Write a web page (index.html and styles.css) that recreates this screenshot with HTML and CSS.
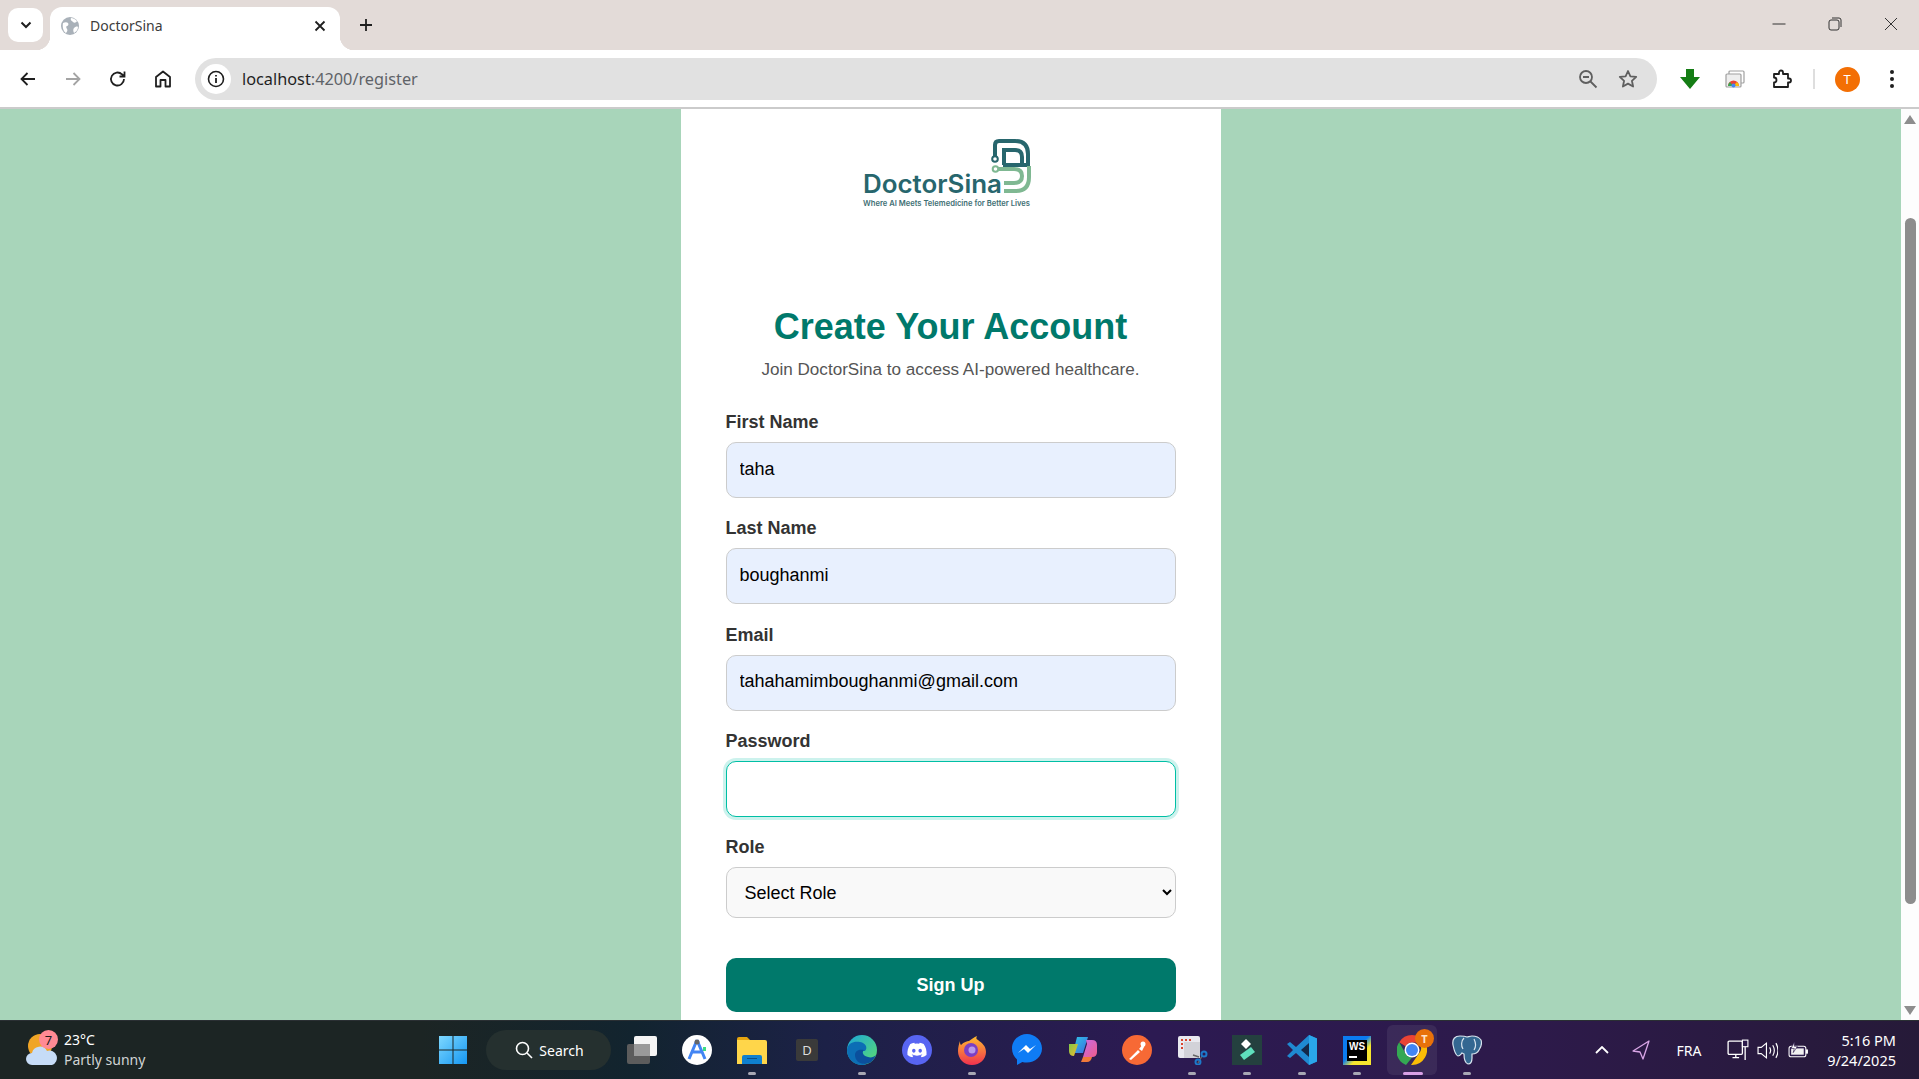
FILE: index.html
```html
<!DOCTYPE html>
<html lang="en">

<head>
    <meta charset="UTF-8">
    <meta name="viewport" content="width=device-width, initial-scale=1.0">
    <title>DoctorSina</title>
    <link rel="stylesheet" href="styles.css">
</head>

<body>
    <div class="tabstrip">
        <button class="tab-search">
            <svg width="16" height="16" viewBox="0 0 16 16"><path d="M3.500 5.500 8 10l4.500-4.500" fill="none" stroke="#1f1f1f" stroke-width="2"/></svg>
        </button>
        <div class="tab">
            <svg class="favicon" width="18" height="18" viewBox="0 0 18 18"><circle cx="9" cy="9" r="9" fill="#a9b1b9"/><path d="M2 6c2-1 4-1 5 0s0 3-1 3-1 2 0 3 0 3-1 4C3 15 1 11 2 6zM10 1c2 0 4 1 6 3-1 2-3 2-4 1s-3-2-2-4zM17 10c0 3-2 5-4 6-1-2-1-4 0-5s3-2 4-1z" fill="#fff"/></svg>
            <span class="tab-title">DoctorSina</span>
            <svg class="tab-close" width="12" height="12" viewBox="0 0 12 12"><path d="M1.500 1.500l9 9M10.500 1.500l-9 9" stroke="#1f1f1f" stroke-width="1.800"/></svg>
        </div>
        <svg class="new-tab" width="14" height="14" viewBox="0 0 14 14"><path d="M7 1v12M1 7h12" stroke="#1f1f1f" stroke-width="1.800"/></svg>
        <div class="window-controls">
            <span class="win-btn"><svg width="14" height="14" viewBox="0 0 14 14"><path d="M0.500 7h13" stroke="#333" stroke-width="1"/></svg></span>
            <span class="win-btn"><svg width="14" height="14" viewBox="0 0 14 14"><rect x="1" y="3" width="10" height="10" rx="2" fill="none" stroke="#333"/><path d="M4 1h7a2 2 0 0 1 2 2v7" fill="none" stroke="#333"/></svg></span>
            <span class="win-btn"><svg width="14" height="14" viewBox="0 0 14 14"><path d="M1 1l12 12M13 1L1 13" stroke="#333" stroke-width="1"/></svg></span>
        </div>
    </div>

    <div class="toolbar">
        <span class="tool-btn"><svg width="20" height="20" viewBox="0 0 20 20"><path d="M17 10H4M9.500 4 3.500 10l6 6" fill="none" stroke="#1f1f1f" stroke-width="1.800"/></svg></span>
        <span class="tool-btn"><svg width="20" height="20" viewBox="0 0 20 20"><path d="M3 10h13M10.500 4l6 6-6 6" fill="none" stroke="#a4a4a4" stroke-width="1.800"/></svg></span>
        <span class="tool-btn"><svg width="20" height="20" viewBox="0 0 20 20"><path d="M16 10a6.500 6.500 0 1 1-2-4.700L16 7M16.500 2.500V7.500h-5" fill="none" stroke="#1f1f1f" stroke-width="1.800"/></svg></span>
        <span class="tool-btn"><svg width="20" height="20" viewBox="0 0 20 20"><path d="M3 17.500V8l7-5.500L17 8v9.500h-4.500V11h-5v6.500z" fill="none" stroke="#1f1f1f" stroke-width="1.800" stroke-linejoin="round"/></svg></span>
        <div class="omnibox">
            <span class="site-info"><svg width="18" height="18" viewBox="0 0 18 18"><circle cx="9" cy="9" r="7.500" fill="none" stroke="#1f1f1f" stroke-width="1.600"/><path d="M9 8v5M9 5v1.600" stroke="#1f1f1f" stroke-width="1.800"/></svg></span>
            <span class="url"><span class="url-host">localhost</span>:4200/register</span>
            <svg class="omni-icon" width="20" height="20" viewBox="0 0 20 20"><circle cx="8" cy="8" r="6" fill="none" stroke="#5f5f5f" stroke-width="1.800"/><path d="M5 8h6M12.500 12.500l6 6" stroke="#5f5f5f" stroke-width="1.800"/></svg>
            <svg class="omni-icon" width="20" height="20" viewBox="0 0 20 20"><path d="M10 2l2.400 5.300 5.800.6-4.300 3.900 1.200 5.700L10 14.600l-5.100 2.900 1.200-5.700L1.800 7.900l5.800-.6z" fill="none" stroke="#5f5f5f" stroke-width="1.800" stroke-linejoin="round"/></svg>
        </div>
        <div class="toolbar-right">
            <span class="tool-btn"><svg width="22" height="20" viewBox="0 0 22 20"><path d="M7 0h8v8h6L11 20 1 8h6z" fill="#157d15"/></svg></span>
            <span class="tool-btn"><svg width="20" height="18" viewBox="0 0 20 18"><rect x="4" y="1" width="15" height="12" rx="1" fill="#fff" stroke="#a0a0a0" stroke-width="1.200"/><rect x="1" y="4" width="15" height="13" rx="1" fill="#eee" stroke="#a0a0a0" stroke-width="1.200"/><path d="M3 16a5.500 5.500 0 0 1 11 0z" fill="#ea4335"/><path d="M3 16a5.500 5.500 0 0 1 2-4l3 4z" fill="#34a853"/><path d="M14 16a5.500 5.500 0 0 0-2-4l-4 4z" fill="#fbbc05"/><circle cx="8.500" cy="15.500" r="2" fill="#4285f4"/></svg></span>
            <span class="tool-btn puzzle-btn"><svg width="20" height="20" viewBox="0 0 20 20"><path d="M2 5h5V3.500a2 2 0 0 1 4 0V5h5v4.500h1a2 2 0 0 1 0 4h-1V18H2v-4.500a2.500 2.500 0 0 0 0-5z" fill="none" stroke="#1f1f1f" stroke-width="1.800" stroke-linejoin="round"/></svg></span>
            <span class="toolbar-sep"></span>
            <span class="tool-btn avatar-btn"><span class="avatar">T</span></span>
            <span class="tool-btn"><svg width="6" height="20" viewBox="0 0 6 20"><circle cx="3" cy="3" r="2" fill="#1f1f1f"/><circle cx="3" cy="10" r="2" fill="#1f1f1f"/><circle cx="3" cy="17" r="2" fill="#1f1f1f"/></svg></span>
        </div>
    </div>

    <div class="viewport">
        <main class="page">
            <div class="card">
                <svg class="logo" width="180" height="72" viewBox="0 0 180 72">
                    <path d="M134 24V10q0-4 4-4h16q13 0 13 13v11" fill="none" stroke="#27666d" stroke-width="4"/>
                    <path d="M143 30V15h11q7 0 7 7v8M142 30h27" fill="none" stroke="#27666d" stroke-width="4"/>
                    <circle cx="134" cy="24" r="2.800" fill="#fff" stroke="#27666d" stroke-width="2"/>
                    <path d="M137 34h16q8 0 8 7t-8 7h-10M168 31v11q0 14-13 14h-12" fill="none" stroke="#7fb892" stroke-width="4"/>
                    <circle cx="134.500" cy="34" r="2.800" fill="#fff" stroke="#7fb892" stroke-width="2"/>
                    <text class="logo-name" x="2" y="58" textLength="139" lengthAdjust="spacingAndGlyphs">DoctorSina</text>
                    <text class="logo-tag" x="2" y="70.500" textLength="167" lengthAdjust="spacingAndGlyphs">Where AI Meets Telemedicine for Better Lives</text>
                </svg>

                <h1>Create Your Account</h1>
                <p class="subtitle">Join DoctorSina to access AI-powered healthcare.</p>

                <form>
                    <div class="field">
                        <label>First Name</label>
                        <input class="autofilled" type="text" value="taha">
                    </div>
                    <div class="field">
                        <label>Last Name</label>
                        <input class="autofilled" type="text" value="boughanmi">
                    </div>
                    <div class="field">
                        <label>Email</label>
                        <input class="autofilled" type="email" value="tahahamimboughanmi@gmail.com">
                    </div>
                    <div class="field">
                        <label>Password</label>
                        <input class="focused" type="password">
                    </div>
                    <div class="field">
                        <label>Role</label>
                        <select>
                            <option>Select Role</option>
                        </select>
                    </div>
                    <button class="submit-btn" type="button">Sign Up</button>
                </form>
            </div>
        </main>
        <div class="scrollbar">
            <span class="arrow-up"></span>
            <span class="thumb"></span>
            <span class="arrow-down"></span>
        </div>
    </div>

    <footer class="taskbar">
        <div class="weather">
            <div class="weather-icon">
                <svg width="32" height="38" viewBox="0 0 32 38"><circle cx="14" cy="15" r="12" fill="#f0a526"/><path d="M6 34a6 6 0 0 1 0-12 8 8 0 0 1 15-2 7 7 0 0 1 5 14z" fill="#c6dcf7"/></svg>
                <span class="weather-badge">7</span>
            </div>
            <div class="weather-text">
                <span class="temp">23°C</span>
                <span class="sky">Partly sunny</span>
            </div>
        </div>

        <svg class="start" width="30" height="30" viewBox="0 0 30 30">
            <defs><linearGradient id="winGrad" x1="0" y1="0" x2="1" y2="1"><stop offset="0" stop-color="#7ed8ff"/><stop offset="1" stop-color="#1597f2"/></linearGradient></defs>
            <path d="M1 1h13.500v13.500H1zM15.500 1H29v13.500H15.500zM1 15.500h13.500V29H1zM15.500 15.500H29V29H15.500z" fill="url(#winGrad)"/>
        </svg>

        <div class="search-pill">
            <svg width="18" height="18" viewBox="0 0 18 18"><circle cx="7.500" cy="7.500" r="6" fill="none" stroke="#fff" stroke-width="1.600"/><path d="M12 12l5 5" stroke="#fff" stroke-width="1.600"/></svg>
            <span>Search</span>
        </div>

        <div class="apps">
            <div class="app"><svg width="32" height="30" viewBox="0 0 32 30"><rect x="1" y="9" width="23" height="20" rx="2" fill="#5c5c5c"/><rect x="8" y="1" width="23" height="20" rx="2" fill="#f5f5f5"/><rect x="8" y="9" width="16" height="12" fill="#9a9a9a"/></svg></div>
            <div class="app"><svg width="30" height="30" viewBox="0 0 30 30"><circle cx="15" cy="15" r="15" fill="#fff"/><path d="M15 5 7 24M15 5l8 19M10 17h10" fill="none" stroke="#4285f4" stroke-width="3"/><circle cx="15" cy="7" r="2.500" fill="#666"/><path d="M21 12h3v4h-3z" fill="#3ddc84"/></svg></div>
            <div class="app"><svg width="30" height="28" viewBox="0 0 30 28"><path d="M0 3q0-2 2-2h8l3 3h-13z" fill="#e5a50f"/><path d="M0 4h28q2 0 2 2v22H0z" fill="#ffd64a"/><path d="M5 21q0-2 2-2h16q2 0 2 2v7H5z" fill="#0f80cf"/><path d="M10 22.500h10" stroke="#0a4f8a" stroke-width="1"/></svg><span class="run"></span></div>
            <div class="app"><span class="d-icon">D</span></div>
            <div class="app"><svg width="30" height="30" viewBox="0 0 30 30"><defs><linearGradient id="edgeGrad" x1="0" y1="0" x2="1" y2="1"><stop offset="0" stop-color="#1ba6d9"/><stop offset="1" stop-color="#5dde6e"/></linearGradient></defs><circle cx="15" cy="15" r="15" fill="url(#edgeGrad)"/><path d="M0 15C1 7 8 6 13 7c6 1 8 6 5 9-3 0-8-1-9 3-1 5 4 9 10 10-1 1-3 1-4 1C6 30 0 23 0 15z" fill="#0c6eb5"/><path d="M8 20c0-5 5-6 9-5-3 3 0 6 4 7 3 1 6 0 8-2-2 5-6 9-11 9-6 0-10-4-10-9z" fill="#0b4f9c"/></svg><span class="run"></span></div>
            <div class="app"><svg width="30" height="30" viewBox="0 0 30 30"><circle cx="15" cy="15" r="15" fill="#5865f2"/><path transform="translate(5.400 5.400) scale(.8)" fill="#fff" d="M20.317 4.370a19.791 19.791 0 0 0-4.885-1.515.074.074 0 0 0-.079.037c-.21.375-.444.864-.608 1.250a18.270 18.270 0 0 0-5.487 0 12.640 12.640 0 0 0-.617-1.250.077.077 0 0 0-.079-.037A19.736 19.736 0 0 0 3.677 4.370a.07.07 0 0 0-.032.027C.533 9.046-.32 13.580.099 18.057a.082.082 0 0 0 .031.057 19.900 19.900 0 0 0 5.993 3.030.078.078 0 0 0 .084-.028 14.090 14.090 0 0 0 1.226-1.994.076.076 0 0 0-.041-.106 13.107 13.107 0 0 1-1.872-.892.077.077 0 0 1-.008-.128 10.200 10.200 0 0 0 .372-.292.074.074 0 0 1 .077-.01c3.928 1.793 8.180 1.793 12.062 0a.074.074 0 0 1 .078.01c.12.098.246.198.373.292a.077.077 0 0 1-.006.127 12.299 12.299 0 0 1-1.873.892.077.077 0 0 0-.041.107c.36.698.772 1.362 1.225 1.993a.076.076 0 0 0 .084.028 19.839 19.839 0 0 0 6.002-3.030.077.077 0 0 0 .032-.054c.5-5.177-.838-9.674-3.549-13.660a.061.061 0 0 0-.031-.03zM8.020 15.330c-1.183 0-2.157-1.085-2.157-2.419 0-1.333.956-2.419 2.157-2.419 1.210 0 2.176 1.096 2.157 2.420 0 1.333-.956 2.418-2.157 2.418zm7.975 0c-1.183 0-2.157-1.085-2.157-2.419 0-1.333.955-2.419 2.157-2.419 1.210 0 2.176 1.096 2.157 2.420 0 1.333-.946 2.418-2.157 2.418z"/></svg></div>
            <div class="app"><svg width="30" height="30" viewBox="0 0 30 30"><defs><linearGradient id="foxGrad" x1="0" y1="0" x2="0" y2="1"><stop offset="0" stop-color="#ffbd2e"/><stop offset="1" stop-color="#f0314f"/></linearGradient></defs><path d="M3 6c0 2 0 3 1 4 3-3 6-4 8-4 3-2 5-4 8-5-1 2-1 3 1 4 4 3 8 6 8 12 0 7-6 13-14 13S1 24 1 16c0-4 1-7 2-10z" fill="url(#foxGrad)"/><circle cx="14" cy="15" r="7" fill="#7b3fc4"/><circle cx="15" cy="15" r="3.500" fill="#b799ec"/></svg><span class="run"></span></div>
            <div class="app"><svg width="30" height="32" viewBox="0 0 30 32"><path d="M15 0C7 0 0 6 0 14.500c0 4.500 2 8.400 5 11V31l5.300-3c1.500.4 3 .6 4.700.6 8 0 15-6 15-14.100S23 0 15 0z" fill="#0f7cf5"/><path d="M6 19l8-8 4 4 6-4-8 8-4-4z" fill="#fff"/></svg></div>
            <div class="app"><svg width="29" height="26" viewBox="0 0 29 26"><defs><linearGradient id="copGrad1" x1="0" y1="0" x2="1" y2="1"><stop offset="0" stop-color="#2fc5e8"/><stop offset="1" stop-color="#3b6be0"/></linearGradient><linearGradient id="copGrad2" x1="0" y1="0" x2="1" y2="1"><stop offset="0" stop-color="#7fc948"/><stop offset="1" stop-color="#f6b72e"/></linearGradient><linearGradient id="copGrad3" x1="0" y1="0" x2="1" y2="1"><stop offset="0" stop-color="#c56be8"/><stop offset="1" stop-color="#ef5c8a"/></linearGradient></defs><path d="M9 0h11l-5 16H5z" fill="url(#copGrad1)"/><path d="M1 7h9L6 19q-5 0-5-5z" fill="url(#copGrad2)"/><path d="M18 3h6q5 0 5 5v7q0 5-5 5h-9l4-13z" fill="url(#copGrad3)"/><path d="M13 25h6q4 0 5-5h-9z" fill="#f07a3a"/></svg></div>
            <div class="app"><svg width="30" height="30" viewBox="0 0 30 30"><circle cx="15" cy="15" r="15" fill="#f76935"/><path d="M7 24l9-9 2 2-9 8zM17 14l4-5 2 1-3 6z" fill="#fff"/><circle cx="21" cy="9" r="2.500" fill="#fff"/></svg></div>
            <div class="app"><svg width="31" height="30" viewBox="0 0 31 30"><rect x="1" y="1" width="22" height="22" rx="2" fill="#e9e9ef"/><rect x="7" y="7" width="16" height="16" fill="#d2d2d8"/><path d="M4 4h2v2H4zM8 4h2v2H8zM12 4h2v2h-2zM4 8h2v2H4zM4 12h2v2H4z" fill="#d9452f"/><path d="M16 20l6 2M21 28l4-7" stroke="#666" stroke-width="1.500"/><circle cx="27" cy="19" r="2.500" fill="none" stroke="#1d79c9" stroke-width="2"/><circle cx="21" cy="27" r="2.500" fill="none" stroke="#1d79c9" stroke-width="2"/></svg><span class="run"></span></div>
            <div class="app"><svg width="30" height="30" viewBox="0 0 30 30"><rect width="30" height="30" fill="#24403f"/><path d="M9 9l5-5 5 5-5 5z" fill="#fff"/><path d="M8 20l11-8 4 5-11 8z" fill="#5fe0bd"/></svg><span class="run"></span></div>
            <div class="app"><svg width="30" height="30" viewBox="0 0 30 30"><path d="M22 0l8 3.500v23L22 30 9 18l-6 5-3-2 6-6-6-6 3-2 6 5z" fill="#1f8ad2"/><path d="M22 0l8 3.500v23L22 30z" fill="#2aa7ea"/><path d="M22 8l-8 7 8 7z" fill="#132848"/></svg><span class="run"></span></div>
            <div class="app"><span class="ws-icon"><span class="ws-inner">WS<span class="ws-bar"></span></span></span><span class="run"></span></div>
            <div class="app app-active"><span class="chrome-wrap"><svg width="30" height="30" viewBox="0 0 30 30"><path d="M15 0a15 15 0 0 1 13 7.500H15a7.500 7.500 0 0 0-6.500 3.800L2.200 7.200A15 15 0 0 1 15 0z" fill="#ea4335"/><path d="M2.200 7.200l6.300 11.300a7.500 7.500 0 0 0 6.500 4L9 30A15 15 0 0 1 2.200 7.200z" fill="#34a853"/><path d="M28 7.500A15 15 0 0 1 15 30h-1l7.500-11a7.500 7.500 0 0 0 0-11.500z" fill="#fbbc05"/><circle cx="15" cy="15" r="7.500" fill="#fff"/><circle cx="15" cy="15" r="6" fill="#4285f4"/></svg><span class="chrome-badge">T</span></span><span class="run run-active"></span></div>
            <div class="app"><svg width="30" height="30" viewBox="0 0 30 30"><path d="M8 1C3 1 0 4 1 10c1 5 2 10 5 11 2 0 3-2 4-3l2 1c0 4 1 9 4 10 3 0 4-2 4-6v-4c3 0 6-2 7-4 2-3 3-7 2-10-2-3-6-4-9-4-2 0-4 1-5 1-2-1-5-1-7-1z" fill="#336791" stroke="#d8e4ee" stroke-width="1.200"/><path d="M12 3c-3 3-3 8-1 11M22 4c2 4 2 8 0 11" fill="none" stroke="#d8e4ee" stroke-width="1.200"/></svg><span class="run"></span></div>
        </div>

        <div class="tray">
            <svg class="tray-chevron" width="14" height="8" viewBox="0 0 14 8"><path d="M1 7l6-6 6 6" fill="none" stroke="#fff" stroke-width="1.800"/></svg>
            <svg class="tray-nav" width="18" height="20" viewBox="0 0 18 20"><path d="M17 1 1 11l7 1 3 7z" fill="none" stroke="#d9a6e6" stroke-width="1.300" stroke-linejoin="round"/></svg>
            <span class="tray-lang">FRA</span>
            <svg class="tray-net" width="22" height="22" viewBox="0 0 20 20"><rect x="1" y="2" width="13" height="12" rx="1" fill="none" stroke="#fff" stroke-width="1.200"/><path d="M5 17h6M8 14v3" stroke="#fff" stroke-width="1.200"/><rect x="14" y="1" width="5" height="6" fill="#2b1a4a" stroke="#fff"/><path d="M16.500 7v12" stroke="#fff" stroke-width="1.200"/></svg>
            <svg class="tray-vol" width="21" height="19" viewBox="0 0 20 18"><path d="M1 6h3l5-4v14l-5-4H1z" fill="none" stroke="#fff" stroke-width="1.100"/><path d="M12 6q2 3 0 6M15 4q3 5 0 10M18 2q4 7 0 14" fill="none" stroke="#fff" stroke-width="1.100"/></svg>
            <svg class="tray-bat" width="21" height="17" viewBox="0 0 20 16"><rect x="1" y="4" width="16" height="10" rx="2" fill="#2b1a4a" stroke="#fff"/><rect x="3" y="6" width="12" height="6" fill="#f0f0f0"/><path d="M18 7v4" stroke="#fff" stroke-width="2"/><path d="M6 0 3 6h3l-1 4 4-6H6z" fill="#fff" stroke="#2b1a4a" stroke-width=".6"/></svg>
            <div class="clock">
                <span>5:16 PM</span>
                <span>9/24/2025</span>
            </div>
        </div>
    </footer>
</body>

</html>
```

FILE: styles.css
```css
* {
    box-sizing: border-box;
}

body {
    font-family: "Liberation Sans", Arial, sans-serif;
    margin: 0;
    padding: 0;
    display: flex;
    flex-direction: column;
    height: 100vh;
    overflow: hidden;
}

/* browser chrome */
.tabstrip {
    display: flex;
    align-items: flex-start;
    height: 50px;
    background-color: #e3dbd8;
    font-family: "Noto Sans", sans-serif;
}

.tab-search {
    width: 35px;
    height: 34px;
    margin: 8px 0 0 8px;
    padding: 0;
    display: flex;
    align-items: center;
    justify-content: center;
    background-color: #fff;
    border: none;
    border-radius: 10px;
}

.tab {
    position: relative;
    display: flex;
    align-items: center;
    width: 290px;
    height: 43px;
    margin: 7px 0 0 7px;
    padding: 0 14px 6px 11px;
    background-color: #fff;
    border-radius: 12px 12px 0 0;
}

.tab::before,
.tab::after {
    content: "";
    position: absolute;
    bottom: 0;
    width: 14px;
    height: 14px;
}

.tab::before {
    left: -14px;
    background: radial-gradient(circle at 0 0, transparent 14px, #fff 14.500px);
}

.tab::after {
    right: -14px;
    background: radial-gradient(circle at 100% 0, transparent 14px, #fff 14.500px);
}

.tab-title {
    flex: 1;
    margin-left: 11px;
    font-size: 14px;
    color: #3c3c3c;
}

.new-tab {
    margin: 18px 0 0 19px;
}

.window-controls {
    display: flex;
    margin-left: auto;
}

.win-btn {
    width: 56px;
    height: 48px;
    display: flex;
    align-items: center;
    justify-content: center;
}

.toolbar {
    display: flex;
    align-items: center;
    height: 59px;
    padding: 1px 4.500px 0 5.500px;
    background-color: #fff;
    border-bottom: 2px solid #cbcbcb;
    border-radius: 10px 10px 0 0;
    font-family: "Noto Sans", sans-serif;
}

.tool-btn {
    width: 45px;
    display: flex;
    align-items: center;
    justify-content: center;
}

.omnibox {
    flex: 1;
    display: flex;
    align-items: center;
    height: 42px;
    margin-left: 9.500px;
    padding: 0 19px 0 6px;
    background-color: #e1e1e1;
    border-radius: 21px;
}

.site-info {
    width: 30px;
    height: 30px;
    display: flex;
    align-items: center;
    justify-content: center;
    background-color: #fff;
    border-radius: 50%;
}

.url {
    flex: 1;
    margin-left: 11px;
    font-size: 16.300px;
    color: #5f6368;
}

.url-host {
    color: #1f1f1f;
}

.omni-icon {
    margin-left: 20px;
}

.toolbar-right {
    display: flex;
    align-items: center;
    margin-left: 10.500px;
}

.puzzle-btn {
    width: 49px;
}

.toolbar-sep {
    width: 2px;
    height: 20px;
    margin: 0 9.500px 0 7px;
    background-color: #dedede;
}

.avatar {
    width: 25px;
    height: 25px;
    display: flex;
    align-items: center;
    justify-content: center;
    background-color: #f36f04;
    border-radius: 50%;
    color: #fff;
    font-size: 13px;
}

/* page */
.viewport {
    flex: 1;
    display: flex;
    min-height: 0;
}

.page {
    flex: 1;
    overflow: hidden;
    background-color: #a8d5ba;
}

.card {
    width: 540px;
    height: 100%;
    margin: 0 auto;
    padding: 26px 45px 0;
    background-color: #fff;
}

.logo {
    display: block;
    margin: 0 auto 98.500px;
}

.logo-name {
    font-family: Inter, sans-serif;
    font-size: 25px;
    font-weight: 600;
    fill: #27666d;
}

.logo-tag {
    font-family: Inter, sans-serif;
    font-size: 8px;
    font-weight: 600;
    fill: #3f6f74;
}

h1 {
    margin: 0 0 11.500px;
    text-align: center;
    font-size: 36px;
    line-height: 42px;
    color: #00796b;
}

.subtitle {
    margin: 0 0 30px;
    text-align: center;
    font-size: 17.100px;
    line-height: 22px;
    color: #555;
}

.field {
    margin-bottom: 19.250px;
}

label {
    display: block;
    margin-bottom: 9px;
    font-size: 18px;
    line-height: 22px;
    font-weight: 700;
    color: #333;
}

input,
select {
    display: block;
    width: 100%;
    font-family: inherit;
    font-size: 18px;
    color: #000;
    border: 1px solid #ccc;
    border-radius: 10px;
}

input {
    height: 56px;
    padding: 0 13px 2px;
}

.autofilled {
    background-color: #e8f0fe;
}

.focused {
    border: 1px solid #00bfa5;
    outline: none;
    box-shadow: 0 0 0 3px rgba(0, 191, 165, 0.2);
}

select {
    height: 51px;
    padding: 0 14px;
    background-color: #f9f9f9;
}

.submit-btn {
    display: block;
    width: 100%;
    height: 54px;
    margin-top: 40px;
    background-color: #00796b;
    color: #fff;
    border: none;
    border-radius: 10px;
    font-family: inherit;
    font-size: 18px;
    font-weight: 700;
}

/* scrollbar */
.scrollbar {
    width: 18px;
    display: flex;
    flex-direction: column;
    align-items: center;
    padding-top: 6px;
    background-color: #fdfdfd;
}

.arrow-up,
.arrow-down {
    width: 0;
    height: 0;
    border-left: 6.500px solid transparent;
    border-right: 6.500px solid transparent;
}

.arrow-up {
    border-bottom: 9px solid #8d8d8d;
}

.arrow-down {
    margin-top: 102px;
    border-top: 9px solid #8d8d8d;
}

.thumb {
    width: 11px;
    height: 686px;
    margin-top: 94px;
    background-color: #8d8d8d;
    border-radius: 6px;
}

/* taskbar */
.taskbar {
    display: flex;
    align-items: center;
    height: 59px;
    padding-left: 26px;
    background: linear-gradient(90deg, #1c2524 0%, #1c2524 22%, #12242f 33%, #1c2147 43%, #2c1a52 60%, #2d1a4a 80%, #261a38 100%);
    border-top: 1px solid #2a2f33;
    font-family: "Noto Sans", sans-serif;
    color: #fff;
}

.weather {
    width: 412px;
    display: flex;
    align-items: center;
}

.weather-icon {
    position: relative;
    width: 38px;
    height: 38px;
}

.weather-badge {
    position: absolute;
    top: -1px;
    left: 13px;
    width: 19px;
    height: 19px;
    display: flex;
    align-items: center;
    justify-content: center;
    background-color: #ff8a94;
    border-radius: 50%;
    color: #1c1c1c;
    font-size: 13px;
}

.weather-text {
    display: flex;
    flex-direction: column;
    font-size: 14px;
    line-height: 20px;
}

.sky {
    color: #d0d4d4;
}

.search-pill {
    display: flex;
    align-items: center;
    justify-content: center;
    gap: 6px;
    width: 125px;
    height: 40px;
    margin-left: 18px;
    padding-left: 2px;
    background-color: #25302f;
    border-radius: 20px;
    font-size: 14px;
}

.apps {
    display: flex;
    margin-left: 3.500px;
}

.app {
    position: relative;
    width: 55px;
    height: 58px;
    display: flex;
    align-items: center;
    justify-content: center;
}

.run {
    position: absolute;
    bottom: 4px;
    left: 23.500px;
    width: 8px;
    height: 3px;
    background-color: #a8a8b4;
    border-radius: 2px;
}

.app-active::before {
    content: "";
    position: absolute;
    top: 4px;
    left: 2.500px;
    width: 50px;
    height: 50px;
    background-color: rgba(255, 255, 255, 0.07);
    border-radius: 6px;
}

.run-active {
    left: 18px;
    width: 20px;
    background-color: #d9a0e6;
}

.d-icon {
    width: 22px;
    height: 22px;
    display: flex;
    align-items: center;
    justify-content: center;
    background-color: #3a3a3a;
    border-radius: 2px;
    color: #ddd;
    font-size: 13px;
}

.ws-icon {
    width: 28px;
    height: 29px;
    padding: 4px;
    background: linear-gradient(135deg, #0b7bf0 0%, #0b7bf0 45%, #f7e62e 65%, #f7e62e 100%);
}

.ws-inner {
    position: relative;
    display: block;
    width: 20px;
    height: 21px;
    padding: 1px 0 0 2px;
    background-color: #000;
    color: #fff;
    font-family: "Liberation Sans", sans-serif;
    font-size: 10px;
    line-height: 11px;
    font-weight: 700;
}

.ws-bar {
    position: absolute;
    left: 2px;
    bottom: 3px;
    width: 8px;
    height: 2px;
    background-color: #fff;
}

.chrome-wrap {
    position: relative;
    display: flex;
}

.chrome-badge {
    position: absolute;
    top: -6px;
    right: -7px;
    width: 19px;
    height: 19px;
    display: flex;
    align-items: center;
    justify-content: center;
    background-color: #e8710a;
    border-radius: 50%;
    color: #ffe3c8;
    font-size: 11px;
    font-weight: 700;
}

.tray {
    flex: 1;
    display: flex;
    align-items: center;
    padding-right: 23px;
}

.tray-chevron {
    margin-left: 100px;
}

.tray-nav {
    margin-left: 23px;
}

.tray-lang {
    margin-left: 27px;
    font-size: 14px;
}

.tray-net {
    margin-left: 26px;
}

.tray-vol {
    margin-left: 8px;
}

.tray-bat {
    margin-left: 10px;
}

.clock {
    margin-left: auto;
    display: flex;
    flex-direction: column;
    align-items: flex-end;
    font-size: 14.500px;
    line-height: 20px;
}
```
